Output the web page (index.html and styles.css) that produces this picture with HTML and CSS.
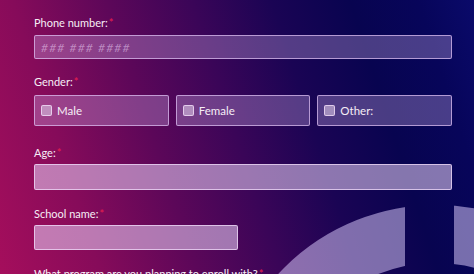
FILE: index.html
```html
<!DOCTYPE html>
<html lang="en">
<head>
<meta charset="utf-8">
<title>Enrollment form</title>
<link rel="stylesheet" href="styles.css">
</head>
<body>
<div class="page">
  <svg class="deco" width="474" height="274" viewBox="0 0 474 274" aria-hidden="true">
    <defs>
      <mask id="cut">
        <rect x="0" y="0" width="474" height="274" fill="#fff"/>
        <rect x="405" y="0" width="49" height="274" fill="#000"/>
      </mask>
    </defs>
    <circle cx="436" cy="420" r="186" fill="none" stroke="rgba(222,208,255,0.52)" stroke-width="58" mask="url(#cut)"/>
  </svg>
  <form class="form">
    <div class="field">
      <label class="label">Phone number:<span class="req">*</span></label>
      <input class="input input-phone" type="text" placeholder="### ### ####">
    </div>
    <div class="field field-gender">
      <label class="label">Gender:<span class="req">*</span></label>
      <div class="choices">
        <label class="choice"><input class="check" type="checkbox"><span>Male</span></label>
        <label class="choice"><input class="check" type="checkbox"><span>Female</span></label>
        <label class="choice"><input class="check" type="checkbox"><span>Other:</span></label>
      </div>
    </div>
    <div class="field">
      <label class="label">Age:<span class="req">*</span></label>
      <input class="input input-solid" type="text">
    </div>
    <div class="field">
      <label class="label">School name:<span class="req">*</span></label>
      <input class="input input-solid input-half" type="text">
    </div>
    <div class="field">
      <label class="label">What program are you planning to enroll with?<span class="req">*</span></label>
    </div>
  </form>
</div>
</body>
</html>
```
FILE: styles.css
```css
html, body {
  margin: 0;
  padding: 0;
}
body {
  width: 474px;
  height: 274px;
  overflow: hidden;
  font-family: Lato, "Open Sans", sans-serif;
}
.page {
  position: relative;
  width: 474px;
  height: 274px;
  overflow: hidden;
  background: linear-gradient(72deg, #a50e5c 0%, #860b5a 18%, #5c0759 35%, #3a0558 50%, #1a0454 64%, #080450 78%, #07055a 90%, #0a0a6a 100%);
}
.deco {
  position: absolute;
  left: 0;
  top: 0;
}
.form {
  position: relative;
  display: flex;
  flex-direction: column;
  padding: 16px 0 0 34px;
  width: 418px;
}
.field {
  display: flex;
  flex-direction: column;
  gap: 5px;
  margin-bottom: 16px;
}
.field-gender {
  gap: 6px;
  margin-bottom: 20px;
}
.field:nth-child(3), .field:nth-child(4) {
  gap: 4px;
  margin-bottom: 17px;
}
.label {
  font-size: 11px;
  line-height: 14px;
  color: #f6eef6;
}
.req {
  color: #e8204e;
  margin-left: 1px;
}
.input {
  box-sizing: border-box;
  width: 418px;
  height: 24px;
  margin: 0;
  padding: 0 6px;
  border: 1px solid rgba(225, 195, 245, 0.7);
  border-radius: 2px;
  background: rgba(210, 180, 240, 0.32);
  font-family: Lato, sans-serif;
  font-size: 11px;
  color: #fff;
  outline: none;
}
.input::placeholder {
  color: rgba(240, 215, 250, 0.5);
  font-style: italic;
  font-size: 12px;
  letter-spacing: 1.2px;
}
.input-solid {
  height: 26px;
  background: rgba(232, 208, 248, 0.56);
  border-color: rgba(240, 220, 250, 0.75);
}
.field:nth-child(4) .input-solid {
  height: 25px;
}
.input-half {
  width: 204px;
}
.choices {
  display: flex;
  gap: 7px;
}
.choice {
  box-sizing: border-box;
  flex: 1;
  height: 31px;
  display: flex;
  align-items: center;
  gap: 5px;
  padding-left: 6px;
  border: 1px solid rgba(225, 195, 245, 0.7);
  border-radius: 2px;
  background: rgba(210, 180, 240, 0.32);
  font-size: 11.5px;
  color: #f6eef6;
}
.check {
  appearance: none;
  -webkit-appearance: none;
  box-sizing: border-box;
  width: 11px;
  height: 11px;
  margin: 0;
  border: 1px solid rgba(245, 225, 250, 0.75);
  border-radius: 2px;
  background: rgba(215, 195, 225, 0.6);
}
```
